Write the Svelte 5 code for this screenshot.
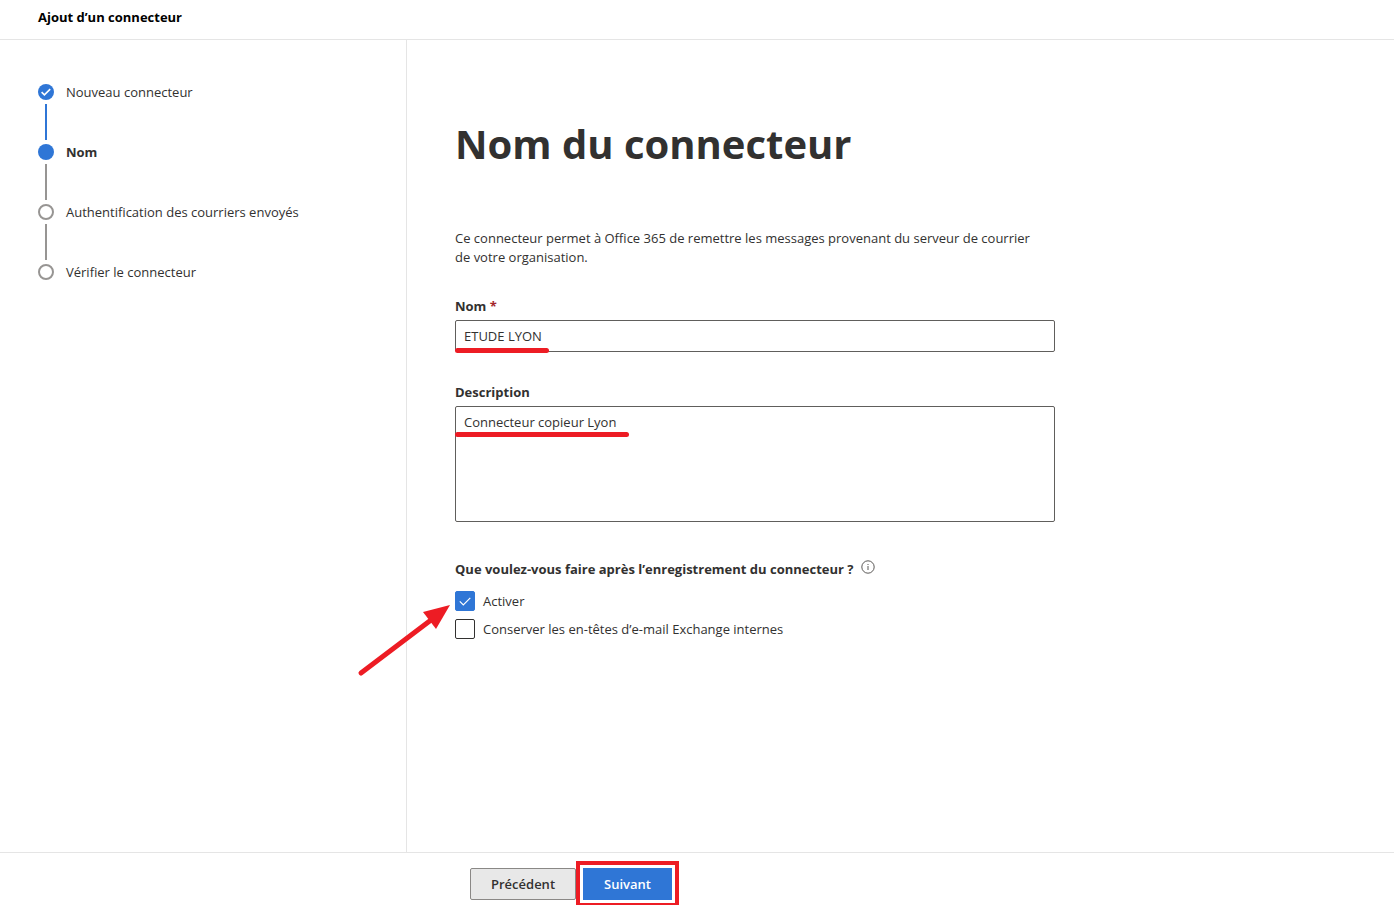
<script>
	let name = $state('ETUDE LYON');
	let description = $state('Connecteur copieur Lyon');
	let enabled = $state(true);
	let keepHeaders = $state(false);

	const steps = [
		{ label: 'Nouveau connecteur', status: 'done' },
		{ label: 'Nom', status: 'current' },
		{ label: 'Authentification des courriers envoyés', status: 'todo' },
		{ label: 'Vérifier le connecteur', status: 'todo' }
	];
</script>

<div class="wizard">
	<header>Ajout d’un connecteur</header>

	<div class="body">
		<nav>
			<ol>
				{#each steps as step}
					<li class={step.status} aria-current={step.status === 'current' ? 'step' : undefined}>
						<span class="marker">
							{#if step.status === 'done'}
								<svg viewBox="0 0 16 16" width="16" height="16" aria-hidden="true">
									<path d="M3.6 8.2l2.8 2.6 5.8-5.6" fill="none" stroke="#fff" stroke-width="1.6" />
								</svg>
							{/if}
						</span>
						<span>{step.label}</span>
					</li>
				{/each}
			</ol>
		</nav>

		<main>
			<form id="connector">
				<h1>Nom du connecteur</h1>
				<p>
					Ce connecteur permet à Office 365 de remettre les messages provenant du serveur de courrier
					de votre organisation.
				</p>

				<div class="field">
					<label for="name">Nom <span class="required">*</span></label>
					<input id="name" type="text" bind:value={name} />
					<span class="underline name-line"></span>
				</div>

				<div class="field">
					<label for="description">Description</label>
					<textarea id="description" bind:value={description}></textarea>
					<span class="underline description-line"></span>
				</div>

				<fieldset>
					<legend>
						Que voulez-vous faire après l’enregistrement du connecteur ?
						<svg class="info" viewBox="0 0 14 14" width="14" height="14" aria-hidden="true">
							<circle cx="7" cy="7" r="6.2" fill="none" stroke="#484644" stroke-width="0.9" />
							<path d="M7 6v4M7 4v1" stroke="#484644" stroke-width="0.9" />
						</svg>
					</legend>
					<label class="check">
						<input type="checkbox" bind:checked={enabled} />
						Activer
						<svg class="arrow" viewBox="0 0 94 74" width="94" height="74" aria-hidden="true">
							<path d="M4 70L74 17" stroke="#ed1c24" stroke-width="5" stroke-linecap="round" />
							<path d="M93 2L66 9L79 26Z" fill="#ed1c24" />
						</svg>
					</label>
					<label class="check">
						<input type="checkbox" bind:checked={keepHeaders} />
						Conserver les en-têtes d’e-mail Exchange internes
					</label>
				</fieldset>
			</form>
		</main>
	</div>

	<footer>
		<button type="button">Précédent</button>
		<button type="submit" form="connector" class="primary">Suivant</button>
	</footer>
</div>

<style>
	:global(body) {
		margin: 0;
		background: #fff;
	}

	.wizard {
		display: flex;
		flex-direction: column;
		min-height: 100vh;
		box-sizing: border-box;
		font-family: 'Segoe UI', 'Open Sans', sans-serif;
		font-size: 13px;
		line-height: 19px;
		color: #323130;
	}

	header {
		padding: 8px 38px 12px;
		border-bottom: 1px solid #e5e5e5;
		color: #000;
		font-weight: 700;
	}

	.body {
		display: flex;
		flex: 1;
	}

	nav {
		flex: 0 0 406px;
		border-right: 1px solid #e5e5e5;
	}

	ol {
		display: flex;
		flex-direction: column;
		gap: 40px;
		margin: 0;
		padding: 42px 38px;
		list-style: none;
	}

	li {
		position: relative;
		display: flex;
		align-items: center;
		gap: 12px;
		height: 20px;
	}

	/* connector down to the next step */
	li:not(:last-child)::after {
		content: '';
		position: absolute;
		top: 22px;
		left: 7px;
		width: 2px;
		height: 36px;
		background: #979593;
	}

	li.done::after {
		background: #2f76d6 !important;
	}

	.marker {
		width: 16px;
		height: 16px;
		box-sizing: border-box;
		border: 2px solid #979593;
		border-radius: 50%;
	}

	.done .marker,
	.current .marker {
		border: 0;
		background: #2f76d6;
	}

	.marker svg {
		display: block;
	}

	.current {
		font-weight: 700;
	}

	main {
		flex: 1;
		padding: 74px 48px 48px;
	}

	form {
		max-width: 600px;
	}

	h1 {
		margin: 0;
		font-size: 40px;
		line-height: 60px;
		font-weight: 700;
	}

	p {
		margin: 55px 0 30px;
		padding-right: 12px;
	}

	.field {
		position: relative;
		display: flex;
		flex-direction: column;
		gap: 4px;
		margin-bottom: 31px;
	}

	.field label,
	legend {
		font-weight: 700;
	}

	.required {
		color: #a4262c;
	}

	input[type='text'],
	textarea {
		box-sizing: border-box;
		width: 100%;
		margin: 0;
		border: 1px solid #605e5c;
		border-radius: 2px;
		padding: 6px 8px;
		background: #fff;
		color: inherit;
		font: inherit;
		outline: none;
	}

	input[type='text'] {
		height: 32px;
	}

	textarea {
		height: 116px;
		resize: none;
	}

	.underline {
		position: absolute;
		left: 0;
		height: 5px;
		border-radius: 3px;
		background: #ed1c24;
	}

	.name-line {
		top: 51px;
		width: 94px;
	}

	.description-line {
		top: 49px;
		width: 174px;
	}

	fieldset {
		display: flex;
		flex-direction: column;
		gap: 8px;
		min-width: 0;
		margin: 38px 0 0;
		border: 0;
		padding: 0;
	}

	legend {
		margin-bottom: 12px;
		padding: 0;
	}

	.info {
		margin-left: 4px;
		vertical-align: 0;
	}

	.check {
		position: relative;
		display: flex;
		align-items: center;
		gap: 8px;
		height: 20px;
	}

	.check input {
		appearance: none;
		width: 20px;
		height: 20px;
		margin: 0;
		border: 1px solid #323130;
		border-radius: 2px;
		background: #fff;
	}

	.check input:checked {
		border-color: #2f76d6;
		background: #2f76d6
			url("data:image/svg+xml,%3Csvg xmlns='http://www.w3.org/2000/svg' viewBox='0 0 18 18'%3E%3Cpath d='M3.8 9.3l3.5 3.5 7-7' fill='none' stroke='white' stroke-width='1.2'/%3E%3C/svg%3E");
	}

	.arrow {
		position: absolute;
		top: 12px;
		left: -98px;
		pointer-events: none;
	}

	footer {
		display: flex;
		gap: 7px;
		padding: 15px 16px 5px 470px;
		border-top: 1px solid #e5e5e5;
	}

	button {
		height: 32px;
		border: 1px solid #8a8886;
		border-radius: 2px;
		padding: 0 20px;
		background: #e8e8e8;
		color: #323130;
		font: inherit;
		font-weight: 600;
	}

	.primary {
		border-color: #2f76d6;
		border-radius: 0;
		background: #2f76d6;
		color: #fff;
		outline: 4px solid #ed1c24;
		outline-offset: 3px;
		box-shadow: 0 0 0 3px #fff;
	}
</style>
